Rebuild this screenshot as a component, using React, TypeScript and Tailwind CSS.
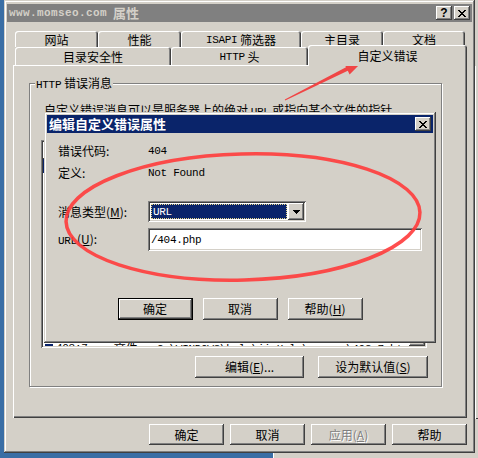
import React from 'react';

const raised = 'shadow-[inset_-1px_-1px_#404040,inset_1px_1px_#ffffff,inset_-2px_-2px_#808080,inset_2px_2px_#d4d0c8]';
const frame = 'shadow-[inset_-1px_-1px_#404040,inset_1px_1px_#d4d0c8,inset_-2px_-2px_#808080,inset_2px_2px_#ffffff]';
const sunken = 'shadow-[inset_1px_1px_#808080,inset_-1px_-1px_#ffffff,inset_2px_2px_#404040,inset_-2px_-2px_#d4d0c8]';
const defaultBtn = 'shadow-[inset_0_0_0_1px_#000000,inset_-2px_-2px_#404040,inset_2px_2px_#ffffff,inset_-3px_-3px_#808080]';
const tabEdge = 'bg-[#d4d0c8] rounded-t-[3px] shadow-[inset_1px_1px_#ffffff,inset_-1px_0_#404040,inset_-2px_0_#808080]';

const M = ({ children }: { children: React.ReactNode }) => (
  <span className="font-['Liberation_Mono',monospace] text-[11px] tracking-[-0.3px]">{children}</span>
);

type BtnProps = { children: React.ReactNode; className?: string; variant?: 'normal' | 'default' | 'disabled' };
const Button = ({ children, className = 'w-[75px] h-[22px]', variant = 'normal' }: BtnProps) => (
  <div
    className={`${className} shrink-0 flex items-center justify-center bg-[#d4d0c8] ${variant === 'default' ? defaultBtn : raised} ${
      variant === 'disabled' ? 'text-[#808080] [text-shadow:1px_1px_0_#ffffff]' : ''
    }`}
  >
    {children}
  </div>
);

const XGlyph = () => (
  <svg width="8" height="7" viewBox="0 0 8 7" shapeRendering="crispEdges">
    <path
      fill="#000"
      d="M0 0h2v1h-2z M6 0h2v1h-2z M1 1h2v1h-2z M5 1h2v1h-2z M2 2h4v1h-4z M3 3h2v1h-2z M2 4h4v1h-4z M1 5h2v1h-2z M5 5h2v1h-2z M0 6h2v1h-2z M6 6h2v1h-2z"
    />
  </svg>
);

const ArrowDown = () => (
  <svg width="7" height="4" viewBox="0 0 7 4" shapeRendering="crispEdges">
    <path fill="#000" d="M0 0h7v1h-7z M1 1h5v1h-5z M2 2h3v1h-3z M3 3h1v1h-1z" />
  </svg>
);

const CapButton = ({ children }: { children: React.ReactNode }) => (
  <div className={`w-[16px] h-[14px] bg-[#d4d0c8] ${raised} flex items-center justify-center`}>{children}</div>
);

const backTabs: [React.ReactNode, string][] = [
  ['网站', 'w-[83px]'],
  ['性能', 'w-[83px]'],
  [<><M>ISAPI</M>&nbsp;筛选器</>, 'w-[120px]'],
  ['主目录', 'w-[82px]'],
  ['文档', 'w-[82px]'],
];

const codes = ['400', '401;1', '401;2', '401;3', '401;4', '401;5', '401;7', '403;1', '403;2', '403;3', '403;4', '403;5', '403;6', '403;7', '403;8'];

export default function App() {
  return (
    <div className="relative w-[478px] h-[458px] overflow-hidden bg-[#3a6ea5] font-['Noto_Sans_CJK_SC',sans-serif] text-[12px] leading-[14px] text-black">
      {/* window behind */}
      <div className="absolute left-[273px] top-[-10px] w-[240px] h-[480px] bg-[#d4d0c8] shadow-[inset_1px_1px_#ffffff]">
        <div className="ml-[202px] mt-[76px] h-[353px] shadow-[inset_1px_0_#ffffff,inset_0_-1px_#404040]" />
      </div>

      {/* properties window */}
      <div className={`absolute left-[4px] top-0 w-[471px] h-[453px] bg-[#d4d0c8] p-[3px] ${frame} flex flex-col`}>
        <div className="mt-[1px] h-[18px] shrink-0 bg-[#808080] flex items-center justify-between pl-[2px] pr-[2px]">
          <div className="flex items-center gap-[6px] font-bold text-[#d4d0c8]">
            <span className="font-['Liberation_Mono',monospace] text-[11px] tracking-[0.4px]">www.momseo.com</span>
            <span className="text-[13px]">属性</span>
          </div>
          <div className="flex gap-[2px]">
            <CapButton>
              <span className="font-['Liberation_Sans',sans-serif] font-bold text-[12px] leading-none">?</span>
            </CapButton>
            <CapButton>
              <XGlyph />
            </CapButton>
          </div>
        </div>

        <div className="mt-[9px] ml-[6px] mr-[5px] flex flex-col">
          <div className="flex h-[16px] pl-[2px]">
            {backTabs.map(([label, w], i) => (
              <div key={i} className={`${w} h-[16px] ${tabEdge} flex items-center justify-center pt-[2px]`}>
                {label}
              </div>
            ))}
          </div>
          <div className="-mt-[2px] flex items-end h-[20px] pl-[2px]">
            <div className={`w-[156px] h-[18px] ${tabEdge} flex items-center justify-center pt-[2px]`}>目录安全性</div>
            <div className={`w-[137px] h-[18px] ${tabEdge} flex items-center justify-center pt-[2px]`}>
              <M>HTTP</M>&nbsp;头
            </div>
            <div className={`relative z-10 -mb-[1px] w-[159px] h-[21px] ${tabEdge} flex items-center justify-center`}>自定义错误</div>
          </div>

          <div className="h-[353px] bg-[#d4d0c8] shadow-[inset_1px_1px_#ffffff,inset_-1px_-1px_#404040,inset_-2px_-2px_#808080] pt-[18px] pl-[16px]">
            <div className="relative w-[413px] h-[304px] border border-[#808080] shadow-[inset_1px_1px_#ffffff,1px_1px_#ffffff] flex flex-col">
              <span className="absolute -top-[8px] left-[5px] bg-[#d4d0c8] px-[1px]">
                <M>HTTP</M> 错误消息
              </span>
              <div className="pl-[14px] pt-[19px] whitespace-nowrap">
                自定义错误消息可以是服务器上的绝对 <M>URL</M> 或指向某个文件的指针
              </div>
              <div className={`mt-[21px] ml-[11px] w-[386px] h-[208px] bg-white p-[2px] ${sunken} flex`}>
                <div className="flex-1 flex flex-col overflow-hidden">
                  <div className="flex h-[17px] shrink-0">
                    <div className={`w-[88px] bg-[#d4d0c8] ${raised} flex items-center pl-[6px]`}>
                      <M>HTTP</M> 错误
                    </div>
                    <div className={`w-[56px] bg-[#d4d0c8] ${raised} flex items-center pl-[6px]`}>输出类型</div>
                    <div className={`flex-1 bg-[#d4d0c8] ${raised} flex items-center pl-[6px]`}>内容</div>
                  </div>
                  {codes.map((c, i) => (
                    <div key={c} className={`flex h-[14px] shrink-0 items-center whitespace-nowrap ${i === 0 ? 'bg-[#0a246a] text-white' : ''}`}>
                      <div className="w-[88px] flex items-center pl-[2px] gap-[3px]">
                        <span className="w-[8px] h-[8px] border-y-2 border-[#0a246a] bg-white" />
                        <M>{c}</M>
                      </div>
                      <div className="w-[56px] pl-[4px]">文件</div>
                      <div className="pl-[4px]">
                        <M>{`C:\\WINDOWS\\help\\iisHelp\\common\\${c.replace(';', '-')}.htm`}</M>
                      </div>
                    </div>
                  ))}
                </div>
                <div className="w-[16px] bg-[#ebe9e4] flex flex-col justify-end">
                  <div className={`h-[16px] bg-[#d4d0c8] ${raised}`} />
                </div>
              </div>
              <div className="mt-[8px] flex justify-end gap-[14px] pr-[13px]">
                <Button className="w-[109px] h-[22px]">
                  编辑(<u>E</u>)...
                </Button>
                <Button className="w-[110px] h-[22px]">
                  设为默认值(<u>S</u>)
                </Button>
              </div>
            </div>
          </div>

          <div className="mt-[6px] flex justify-end gap-[6px]">
            <Button className="w-[75px] h-[21px]">确定</Button>
            <Button className="w-[75px] h-[21px]">取消</Button>
            <Button className="w-[75px] h-[21px]" variant="disabled">
              应用(<u>A</u>)
            </Button>
            <Button className="w-[75px] h-[21px]">帮助</Button>
          </div>
        </div>
      </div>

      {/* edit dialog */}
      <div className={`absolute left-[44px] top-[112px] w-[392px] h-[231px] bg-[#d4d0c8] p-[3px] ${frame} flex flex-col`}>
        <div className="h-[18px] shrink-0 bg-[#0a246a] flex items-center justify-between pl-[2px] pr-[2px]">
          <span className="font-bold text-white text-[13px]">编辑自定义错误属性</span>
          <CapButton>
            <XGlyph />
          </CapButton>
        </div>
        <div className="pl-[11px] flex flex-col">
          <div className="mt-[11px] h-[14px] flex items-center">
            <span className="w-[90px]">错误代码:</span>
            <M>404</M>
          </div>
          <div className="mt-[8px] h-[14px] flex items-center">
            <span className="w-[90px]">定义:</span>
            <M>Not Found</M>
          </div>
          <div className="mt-[21px] h-[21px] flex items-center">
            <span className="w-[90px]">
              消息类型(<u>M</u>):
            </span>
            <div className={`w-[158px] h-[21px] bg-white p-[2px] flex ${sunken}`}>
              <div className="flex-1 m-[1px] bg-[#0a246a] border border-dotted border-[#e9d98a] text-white flex items-center pl-[1px]">
                <M>URL</M>
              </div>
              <div className={`w-[16px] bg-[#d4d0c8] ${raised} flex items-center justify-center`}>
                <ArrowDown />
              </div>
            </div>
          </div>
          <div className="mt-[6px] h-[23px] flex items-center">
            <span className="w-[90px]">
              <M>URL</M>(<u>U</u>):
            </span>
            <div className={`w-[274px] h-[23px] bg-white ${sunken} flex items-center pl-[3px]`}>
              <M>/404.php</M>
            </div>
          </div>
        </div>
        <div className="mt-[47px] flex justify-center gap-[10px]">
          <Button variant="default">确定</Button>
          <Button>取消</Button>
          <Button>
            帮助(<u>H</u>)
          </Button>
        </div>
      </div>

      {/* red annotation */}
      <svg className="absolute inset-0 pointer-events-none" width="478" height="458" viewBox="0 0 478 458">
        <ellipse cx="243" cy="217" rx="177" ry="63" transform="rotate(-1.5 243 217)" fill="none" stroke="#ff3b3b" strokeWidth="3.5" strokeOpacity="0.9" />
        <polygon
          points="285.2,100.6 347.8,70.8 349.6,74.4 363,61 344.2,63.6 346,67.2 284.8,99.6"
          fill="#f04545"
        />
      </svg>
    </div>
  );
}
